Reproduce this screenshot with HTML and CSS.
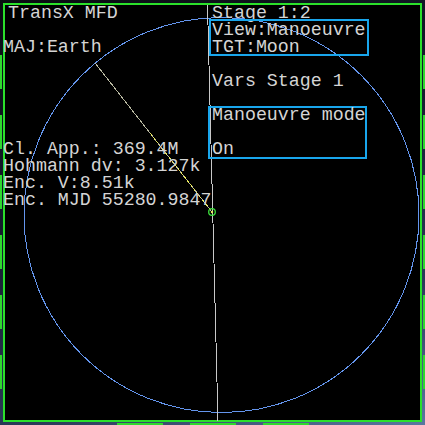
FILE: index.html
```html
<!DOCTYPE html>
<html>
<head>
<meta charset="utf-8">
<title>TransX MFD</title>
<link rel="stylesheet" href="styles.css">
</head>
<body>
<div class="screen">
  <div class="btns btns-left">
    <span class="btn"></span><span class="btn"></span><span class="btn"></span>
    <span class="btn"></span><span class="btn"></span><span class="btn"></span>
  </div>
  <div class="frame">
    <svg class="plot" width="425" height="425" viewBox="0 0 425 425" xmlns="http://www.w3.org/2000/svg">
      <circle cx="221.5" cy="215" r="197.5" fill="none" stroke="#6495ed" stroke-width="1" shape-rendering="crispEdges"/>
      <line x1="207.5" y1="5" x2="218" y2="421" stroke="#c8c8c8" stroke-width="1" shape-rendering="crispEdges"/>
      <line x1="95" y1="63" x2="212" y2="212" stroke="#b8b8a0" stroke-width="1" shape-rendering="crispEdges"/>
      <line x1="150" y1="133" x2="212" y2="212" stroke="#e8e860" stroke-width="1" stroke-dasharray="3 2" shape-rendering="crispEdges"/>
      <circle cx="212" cy="212" r="3.3" fill="none" stroke="#3ee03e" stroke-width="1.3"/>
      <circle cx="212" cy="212" r="1.2" fill="#e8e860"/>
    </svg>
    <div class="text">
      <div class="t c1 r1 title">TransX MFD</div>
      <div class="t c2 r1">Stage 1:2</div>
      <div class="hl hl-view"></div>
      <div class="t c2 r2">View:Manoeuvre</div>
      <div class="t c1 r3">MAJ:Earth</div>
      <div class="t c2 r3">TGT:Moon</div>
      <div class="t c2 r5">Vars Stage 1</div>
      <div class="hl hl-mode"></div>
      <div class="t c2 r7">Manoeuvre mode</div>
      <div class="t c2 r9">On</div>
      <div class="t c1 r9">Cl. App.: 369.4M</div>
      <div class="t c1 r10">Hohmann dv: 3.127k</div>
      <div class="t c1 r11">Enc. V:8.51k</div>
      <div class="t c1 r12">Enc. MJD 55280.9847</div>
    </div>
  </div>
  <div class="btns btns-right">
    <span class="btn"></span><span class="btn"></span><span class="btn"></span>
    <span class="btn"></span><span class="btn"></span><span class="btn"></span>
  </div>
  <div class="btns btns-bottom">
    <span class="btn"></span><span class="btn"></span><span class="btn"></span>
  </div>
</div>
</body>
</html>
```

FILE: styles.css
```css
html, body {
  margin: 0;
  padding: 0;
  background: #0b0e16;
}

.screen {
  width: 425px;
  height: 425px;
  display: grid;
  grid-template-columns: 3px 419px 3px;
  grid-template-rows: 3px 419px 3px;
  background: linear-gradient(160deg, #0a0c12 0%, #141c2c 40%, #2a3a58 75%, #5a78a0 100%);
  overflow: hidden;
}

.btns {
  display: flex;
}

.btn {
  display: block;
  background: #2fd82f;
}

.btns-left {
  grid-column: 1;
  grid-row: 2;
  flex-direction: column;
  padding-top: 52px;
  gap: 26px;
}

.btns-left .btn {
  width: 2px;
  height: 34px;
}

.btns-right {
  grid-column: 3;
  grid-row: 2;
  flex-direction: column;
  padding-top: 52px;
  padding-left: 1px;
  gap: 26px;
}

.btns-right .btn {
  width: 2px;
  height: 34px;
}

.btns-bottom {
  grid-column: 1 / -1;
  grid-row: 3;
  padding-left: 117px;
  padding-top: 1px;
  gap: 27px;
}

.btns-bottom .btn {
  width: 46px;
  height: 2px;
}

.frame {
  grid-column: 2;
  grid-row: 2;
  position: relative;
  box-sizing: border-box;
  border: 2px solid #2be02b;
  background: #000;
}

.plot {
  position: absolute;
  left: -5px;
  top: -5px;
  width: 425px;
  height: 425px;
  overflow: visible;
}

.text {
  position: relative;
  margin-left: -2px;
  display: grid;
  grid-template-columns: 209px 1fr;
  grid-auto-rows: 17px;
  font-family: "Liberation Mono", "Courier New", monospace;
  font-size: 18.3px;
  line-height: 17px;
  color: #d4d4d4;
  white-space: pre;
}

.t { grid-column: 1; }
.c1 { grid-column: 1; }
.c2 { grid-column: 2; }
.r1 { grid-row: 1; }
.r2 { grid-row: 2; }
.r3 { grid-row: 3; }
.r5 { grid-row: 5; }
.r7 { grid-row: 7; }
.r9 { grid-row: 9; }
.r10 { grid-row: 10; }
.r11 { grid-row: 11; }
.r12 { grid-row: 12; }

.title {
  padding-left: 5px;
}

.hl {
  grid-column: 2;
  justify-self: start;
  box-sizing: border-box;
  border: 2px solid #19a6ec;
}

.hl-view {
  grid-row: 2 / 4;
  width: 160px;
  margin-left: -3px;
  margin-top: -3px;
}

.hl-mode {
  grid-row: 7 / 10;
  width: 159px;
  margin-left: -4px;
  margin-top: -1px;
  margin-bottom: -1px;
}
```
